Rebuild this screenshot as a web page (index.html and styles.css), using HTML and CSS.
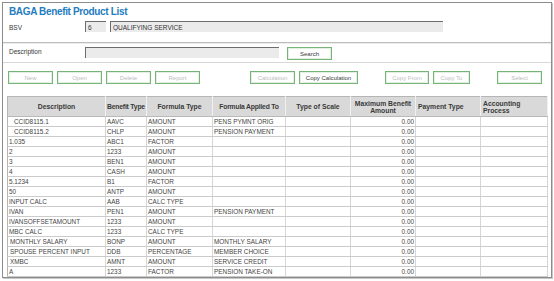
FILE: index.html
```html
<!DOCTYPE html>
<html lang="en">
<head>
  <meta charset="UTF-8">
  <title>BAGA Benefit Product List</title>
  <link rel="stylesheet" href="styles.css">
</head>
<body>
<div class="frame">
  <div class="title">BAGA Benefit Product List</div>

  <div class="field-row bsv-row">
    <label>BSV</label>
    <input class="box code" type="text" value="6" readonly>
    <input class="box name" type="text" value="QUALIFYING SERVICE" readonly>
  </div>

  <div class="sep"></div>

  <div class="field-row desc-row">
    <label>Description</label>
    <input class="box desc" type="text">
    <button class="btn on search">Search</button>
  </div>

  <div class="sep light"></div>

  <div class="toolbar">
    <button class="btn">New</button>
    <button class="btn">Open</button>
    <button class="btn">Delete</button>
    <button class="btn">Report</button>
    <button class="btn calc">Calculation</button>
    <button class="btn on wide">Copy Calculation</button>
    <button class="btn copy-from">Copy From</button>
    <button class="btn narrow">Copy To</button>
    <button class="btn select">Select</button>
  </div>

  <table class="grid">
    <colgroup>
      <col style="width:98px"><col style="width:41px"><col style="width:66px"><col style="width:73px">
      <col style="width:65px"><col style="width:65px"><col style="width:65px"><col>
    </colgroup>
    <thead>
      <tr>
        <th>Description</th>
        <th class="tight">Benefit Type</th>
        <th>Formula Type</th>
        <th class="tight">Formula Applied To</th>
        <th>Type of Scale</th>
        <th>Maximum Benefit Amount</th>
        <th class="left">Payment Type</th>
        <th class="left">Accounting Process</th>
      </tr>
    </thead>
    <tbody>
      <tr><td class="ind">CCID8115.1</td><td>AAVC</td><td>AMOUNT</td><td>PENS PYMNT ORIG</td><td></td><td class="num">0.00</td><td></td><td></td></tr>
      <tr><td class="ind">CCID8115.2</td><td>CHLP</td><td>AMOUNT</td><td>PENSION PAYMENT</td><td></td><td class="num">0.00</td><td></td><td></td></tr>
      <tr><td>1.035</td><td>ABC1</td><td>FACTOR</td><td></td><td></td><td class="num">0.00</td><td></td><td></td></tr>
      <tr><td>2</td><td>1233</td><td>AMOUNT</td><td></td><td></td><td class="num">0.00</td><td></td><td></td></tr>
      <tr><td>3</td><td>BEN1</td><td>AMOUNT</td><td></td><td></td><td class="num">0.00</td><td></td><td></td></tr>
      <tr><td>4</td><td>CASH</td><td>AMOUNT</td><td></td><td></td><td class="num">0.00</td><td></td><td></td></tr>
      <tr><td>5.1234</td><td>B1</td><td>FACTOR</td><td></td><td></td><td class="num">0.00</td><td></td><td></td></tr>
      <tr><td>50</td><td>ANTP</td><td>AMOUNT</td><td></td><td></td><td class="num">0.00</td><td></td><td></td></tr>
      <tr><td>INPUT CALC</td><td>AAB</td><td>CALC TYPE</td><td></td><td></td><td class="num">0.00</td><td></td><td></td></tr>
      <tr><td>IVAN</td><td>PEN1</td><td>AMOUNT</td><td>PENSION PAYMENT</td><td></td><td class="num">0.00</td><td></td><td></td></tr>
      <tr><td>IVANSOFFSETAMOUNT</td><td>1233</td><td>AMOUNT</td><td></td><td></td><td class="num">0.00</td><td></td><td></td></tr>
      <tr><td>MBC CALC</td><td>1233</td><td>CALC TYPE</td><td></td><td></td><td class="num">0.00</td><td></td><td></td></tr>
      <tr><td class="sm">MONTHLY SALARY</td><td>BONP</td><td>AMOUNT</td><td>MONTHLY SALARY</td><td></td><td class="num">0.00</td><td></td><td></td></tr>
      <tr><td class="sm">SPOUSE PERCENT INPUT</td><td>DDB</td><td>PERCENTAGE</td><td>MEMBER CHOICE</td><td></td><td class="num">0.00</td><td></td><td></td></tr>
      <tr><td class="sm">XMBC</td><td>AMNT</td><td>AMOUNT</td><td>SERVICE CREDIT</td><td></td><td class="num">0.00</td><td></td><td></td></tr>
      <tr><td>A</td><td>1233</td><td>FACTOR</td><td>PENSION TAKE-ON</td><td></td><td class="num">0.00</td><td></td><td></td></tr>
    </tbody>
  </table>
</div>
</body>
</html>
```

FILE: styles.css
```css
* { box-sizing: border-box; }

html, body {
  margin: 0;
  background: #fff;
  font-family: 'Liberation Sans', Arial, sans-serif;
  color: #333;
}

.frame {
  margin: 2px;
  width: 550px;
  height: 276px;
  border: 1px solid #8c8c8c;
  box-shadow: 1px 1px 0 #c8c8c8;
  overflow: hidden;
}

.title {
  height: 17px;
  padding: 3px 0 0 6px;
  font-size: 10px;
  font-weight: bold;
  color: #1f7cc0;
  letter-spacing: -0.35px;
}

.field-row {
  display: flex;
  align-items: flex-start;
  padding-left: 6px;
}

.field-row label {
  width: 74px;
  font-size: 6.5px;
  color: #333;
}

.bsv-row {
  height: 22px;
  padding-top: 1px;
}

.bsv-row label { padding-top: 3px; }

.box {
  height: 11px;
  margin: 0;
  padding: 0 2px;
  font-family: inherit;
  font-size: 6.5px;
  color: #333;
  background: #ebebeb;
  border: none;
  border-top: 1px solid #6d6d6d;
  border-left: 1px solid #6d6d6d;
  outline: none;
}

.box.code { width: 21px; margin-left: 2px; }
.box.name { width: 333px; margin-left: 4px; }
.box.desc { width: 194px; margin-left: 2px; margin-top: 2px; }

.sep {
  height: 0;
  border-top: 1px solid #bdbdbd;
  border-bottom: 1px solid #ececec;
}

.sep.light {
  border-top-color: #d8d8d8;
  border-bottom: none;
}

.desc-row {
  height: 18px;
  padding-top: 1px;
}

.desc-row label { padding-top: 3px; }

.btn {
  height: 13px;
  width: 45px;
  margin: 0;
  padding: 0;
  font-family: inherit;
  font-size: 6px;
  color: #bdbdbd;
  background: #fff;
  border: 1px solid #78b478;
  box-shadow: inset 0 0 0 1px #e2f0e2;
  cursor: pointer;
}

.btn.on { color: #3a3a3a; }
.btn.search { margin-left: 8px; margin-top: 2px; }

.toolbar {
  display: flex;
  gap: 4px;
  height: 33px;
  padding: 8px 0 0 5px;
}

.toolbar .calc { margin-left: 46px; }
.toolbar .wide { width: 59px; }
.toolbar .copy-from { margin-left: 23px; width: 44px; }
.toolbar .narrow { width: 37px; }
.toolbar .select { margin-left: 23px; }

.grid {
  margin-left: 4px;
  width: 541px;
  table-layout: fixed;
  border-collapse: collapse;
  border: 1px solid #b5b5b5;
  font-size: 6.4px;
  color: #444;
}

.grid th {
  height: 20px;
  padding: 0 2px;
  background: #d9d9d9;
  border-right: 1px solid #f0f0f0;
  border-bottom: 1px solid #b9b9b9;
  font-weight: bold;
  font-size: 6.8px;
  line-height: 7px;
  color: #3a3a3a;
  text-align: center;
}

.grid th.tight {
  padding: 0;
  white-space: nowrap;
  letter-spacing: -0.2px;
}

.grid th.left { text-align: left; }

.grid td {
  height: 10px;
  padding: 0 0 0 1px;
  line-height: 8px;
  white-space: nowrap;
  overflow: hidden;
  border-right: 1px solid #d6d6d6;
  border-bottom: 1px solid #cbcbcb;
  background: #fff;
}

.grid td.ind { padding-left: 6px; }
.grid td.sm { padding-left: 2px; }
.grid td.num { text-align: right; padding-right: 1px; }
```
